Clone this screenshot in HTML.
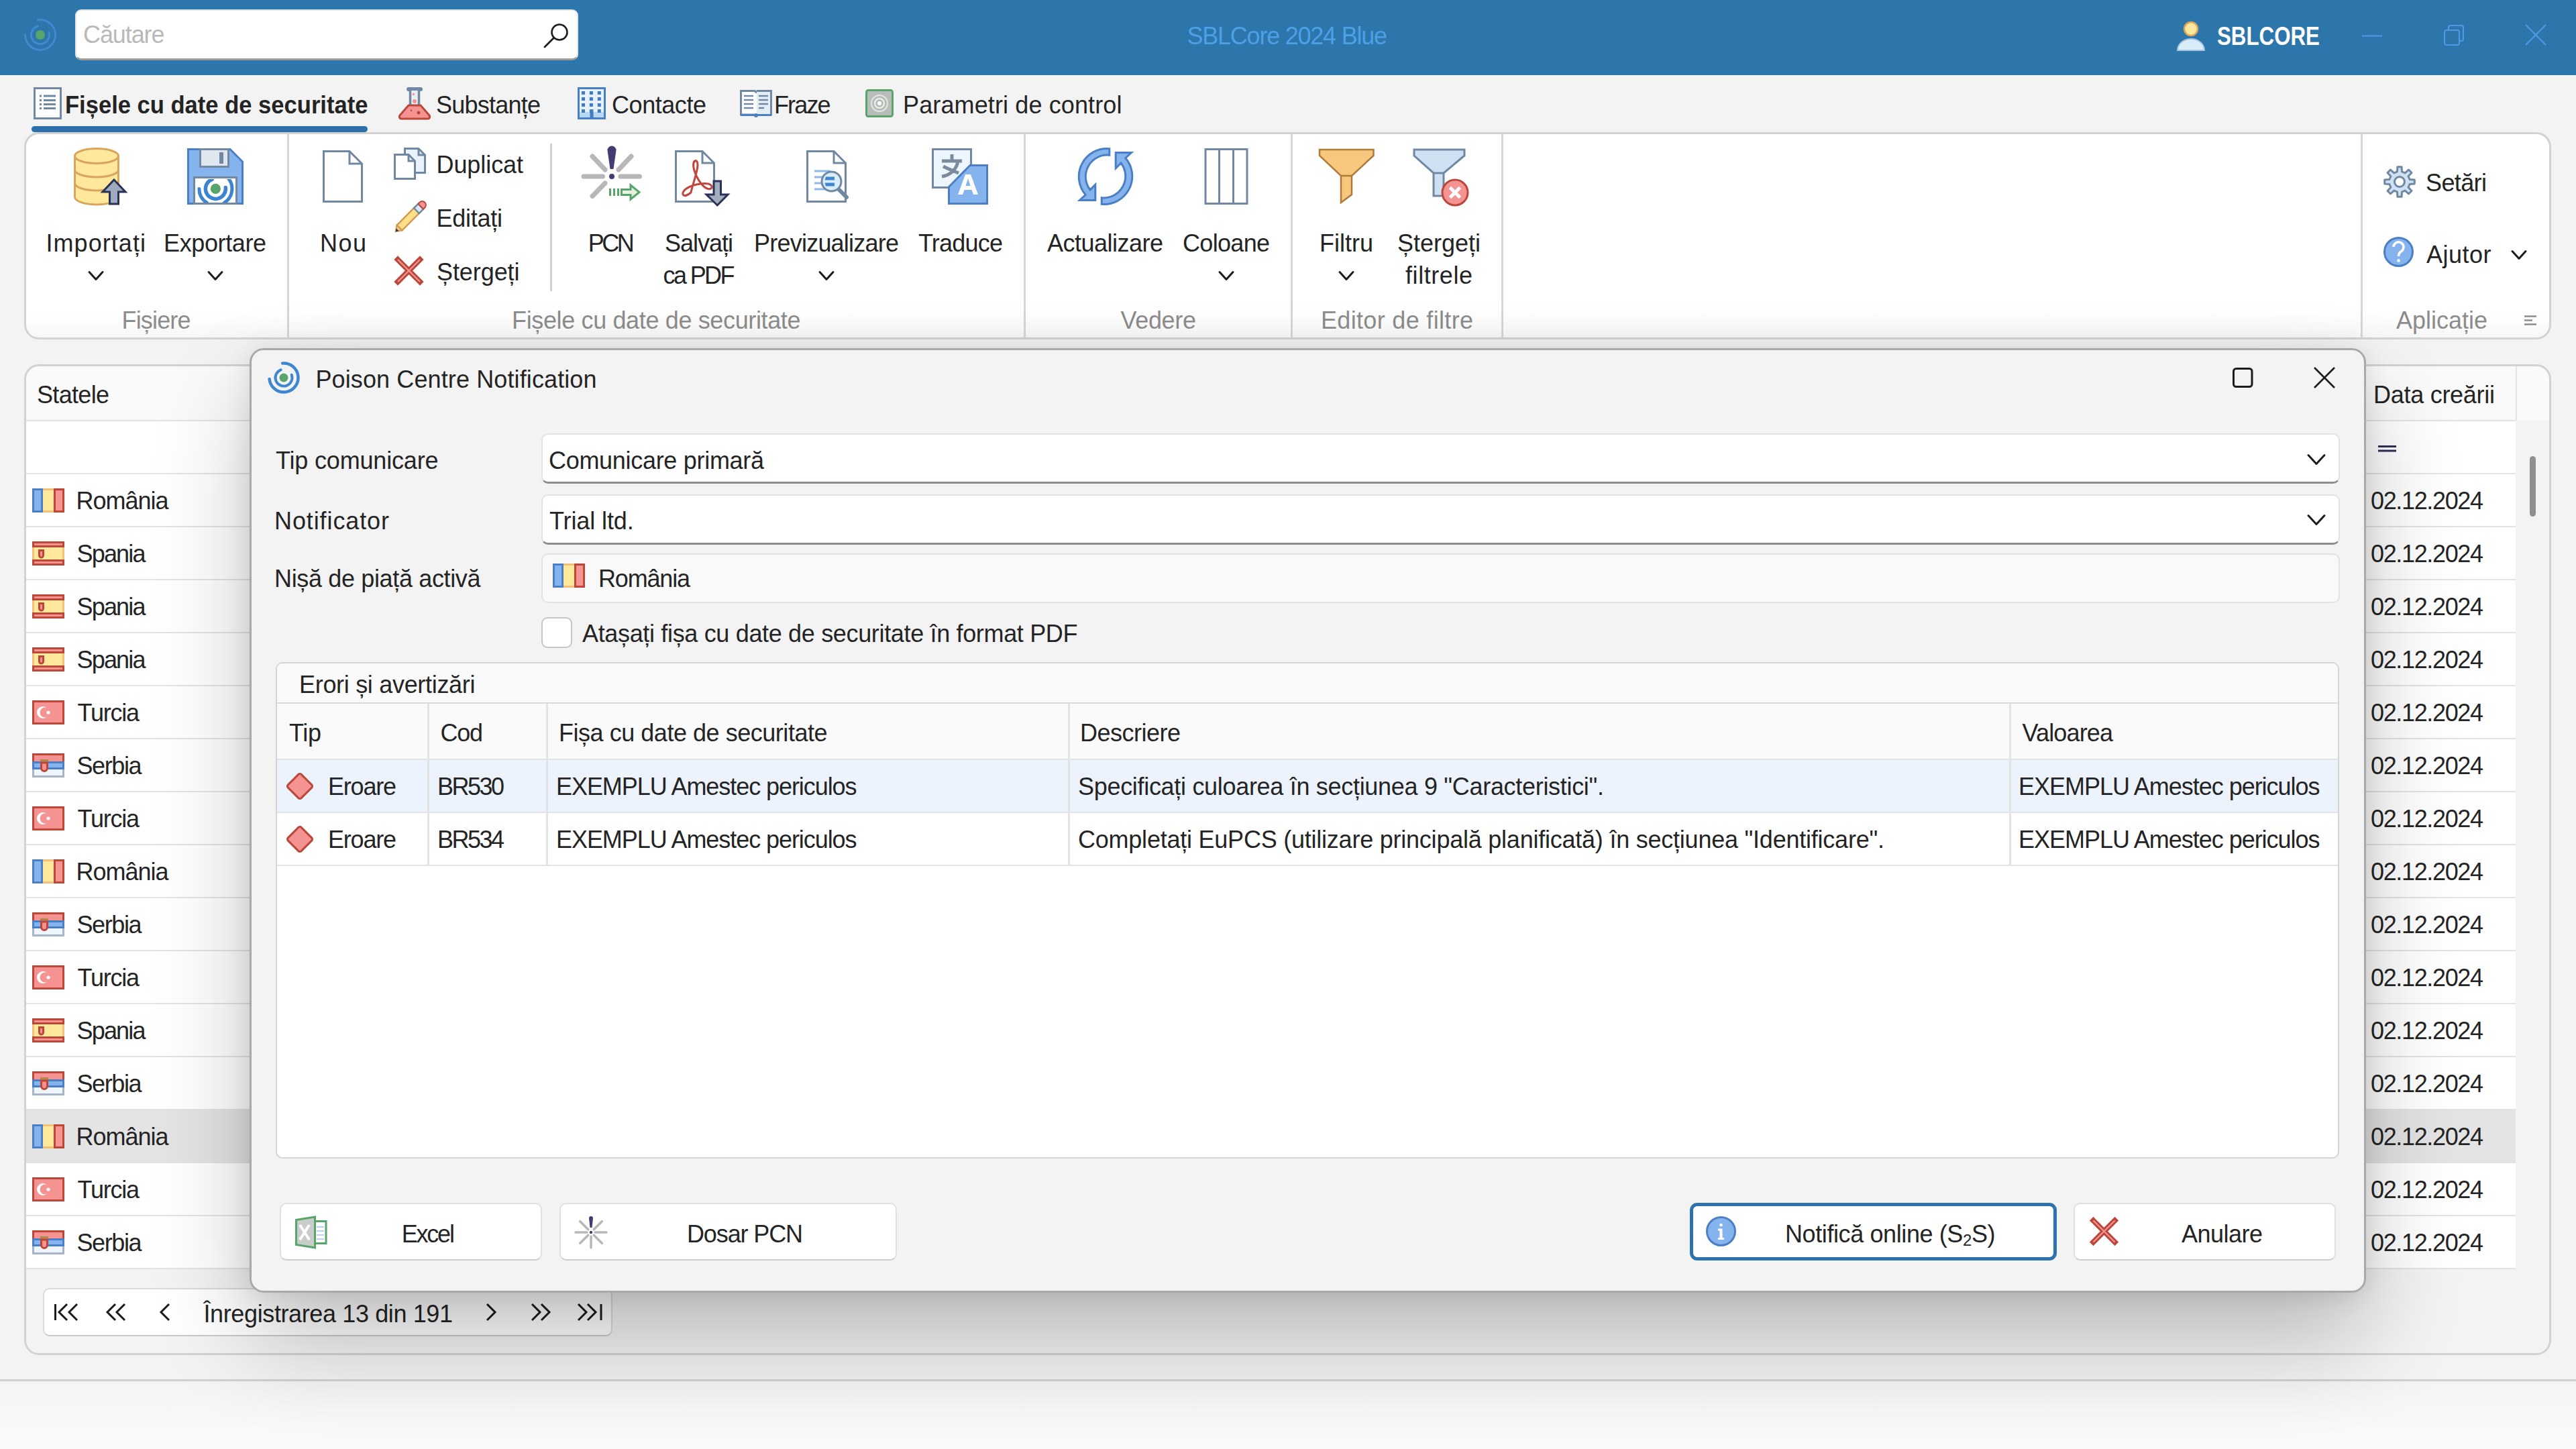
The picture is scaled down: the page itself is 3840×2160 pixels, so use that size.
<!DOCTYPE html><html><head><meta charset="utf-8"><style>
html,body{margin:0;padding:0;width:3840px;height:2160px;overflow:hidden;background:#f3f3f3;font-family:"Liberation Sans",sans-serif}
.t{position:absolute;white-space:pre}
svg{overflow:visible}
</style></head><body>
<div style="position:absolute;left:0px;top:0px;width:3840px;height:112px;background:#2c76ab"></div>
<div style="position:absolute;left:112px;top:14px;width:750px;height:76px;background:#fff;border:2px solid #e4e6e8;border-bottom:3px solid #9c9c9c;border-radius:9px;box-sizing:border-box"></div>
<div class="t" style="left:124.0px;top:34px;font-size:36px;line-height:36px;font-weight:400;color:#b9b9b9;letter-spacing:-1.092px;">Căutare</div>
<div class="t" style="left:1769.5px;top:36px;font-size:36px;line-height:36px;font-weight:400;color:#4d9fe6;letter-spacing:-1.231px;">SBLCore 2024 Blue</div>
<div class="t" style="left:3305.2px;top:35px;font-size:38px;line-height:38px;font-weight:700;color:#ffffff;transform:scaleX(0.8231);transform-origin:0 0">SBLCORE</div>
<svg style="position:absolute;left:30px;top:22px" width="61" height="61" viewBox="30 22 61 61"><path d="M56.1 29.8A22.5 22.5 0 1 1 37.5 52.0" fill="none" stroke="#4a8fd8" stroke-width="3.0" stroke-linecap="round" opacity="0.8"/><path d="M73.0 48.5A13.5 13.5 0 1 1 56.5 39.0" fill="none" stroke="#4a8fd8" stroke-width="3.0" stroke-linecap="round" opacity="0.8"/><circle cx="60" cy="52" r="7.0" fill="#57a56a"/></svg><svg style="position:absolute;left:805px;top:30px" width="45" height="45" viewBox="805 30 45 45"><circle cx="834" cy="48" r="11.5" fill="none" stroke="#1c1c1c" stroke-width="2.6"/><path d="M825.5 56.5L812 70" stroke="#1c1c1c" stroke-width="2.8" stroke-linecap="round"/></svg><svg style="position:absolute;left:3242px;top:28px" width="48" height="51" viewBox="3242 28 48 51"><circle cx="3266" cy="43" r="10" fill="#ffe89c" stroke="#d9a55a" stroke-width="2.5"/><path d="M3246 75A20 17 0 0 1 3286 75Z" fill="#d9ecfa" stroke="#a9c5dd" stroke-width="2"/></svg><svg style="position:absolute;left:3515px;top:45px" width="41" height="15" viewBox="3515 45 41 15"><path d="M3521 53.5H3551" stroke="#4f98e3" stroke-width="2.2"/></svg><svg style="position:absolute;left:3638px;top:33px" width="40" height="39" viewBox="3638 33 40 39"><rect x="3644" y="45" width="22" height="22" rx="3" fill="none" stroke="#4f98e3" stroke-width="2.2"/><path d="M3650 44V41A3 3 0 0 1 3653 38H3669A3 3 0 0 1 3672 41V58A3 3 0 0 1 3669 61H3667" fill="none" stroke="#4f98e3" stroke-width="2.2"/></svg><svg style="position:absolute;left:3758px;top:30px" width="44" height="44" viewBox="3758 30 44 44"><path d="M3765 37L3795 67M3795 37L3765 67" stroke="#4f98e3" stroke-width="2.4"/></svg>
<div class="t" style="left:97.1px;top:139px;font-size:36px;line-height:36px;font-weight:700;color:#242424;transform:scaleX(0.9600);transform-origin:0 0">Fișele cu date de securitate</div>
<div style="position:absolute;left:47px;top:188px;width:501px;height:9px;background:#2b70aa;border-radius:5px"></div>
<div class="t" style="left:650.0px;top:139px;font-size:36px;line-height:36px;font-weight:400;color:#242424;letter-spacing:-0.763px;">Substanțe</div>
<div class="t" style="left:912.0px;top:139px;font-size:36px;line-height:36px;font-weight:400;color:#242424;letter-spacing:-0.438px;">Contacte</div>
<div class="t" style="left:1154.0px;top:139px;font-size:36px;line-height:36px;font-weight:400;color:#242424;letter-spacing:-1.875px;">Fraze</div>
<div class="t" style="left:1346.0px;top:139px;font-size:36px;line-height:36px;font-weight:400;color:#242424;letter-spacing:0.124px;">Parametri de control</div>
<svg style="position:absolute;left:48px;top:128px" width="47" height="52" viewBox="48 128 47 52"><rect x="51.5" y="131.5" width="39" height="45" fill="#fff" stroke="#7088a2" stroke-width="3"/><rect x="59" y="141.5" width="3" height="3" fill="#7088a2"/><rect x="65" y="141.5" width="18" height="3" fill="#7088a2"/><rect x="59" y="148.0" width="3" height="3" fill="#7088a2"/><rect x="65" y="148.0" width="18" height="3" fill="#7088a2"/><rect x="59" y="154.0" width="3" height="3" fill="#7088a2"/><rect x="65" y="154.0" width="18" height="3" fill="#7088a2"/><rect x="59" y="160.0" width="3" height="3" fill="#7088a2"/><rect x="65" y="160.0" width="18" height="3" fill="#7088a2"/></svg><svg style="position:absolute;left:592px;top:128px" width="53" height="53" viewBox="592 128 53 53"><path d="M609 133H627" stroke="#7088a2" stroke-width="6" stroke-linecap="round"/><path d="M611.5 135V158H624.5V135" fill="#e8eef3" stroke="#7088a2" stroke-width="3.5"/><circle cx="616.5" cy="140.5" r="1.7" fill="#f59393"/><circle cx="618" cy="151" r="3" fill="#f59393"/><path d="M609 157H627L640 172A3 3 0 0 1 638 177H598A3 3 0 0 1 596 172Z" fill="#f59393" stroke="#bb4739" stroke-width="3" stroke-linejoin="round"/><circle cx="613" cy="164.5" r="1.2" fill="#bb4739"/><circle cx="624" cy="168" r="2.5" fill="#bb4739"/></svg><svg style="position:absolute;left:858px;top:128px" width="48" height="52" viewBox="858 128 48 52"><rect x="862.5" y="131.5" width="39" height="45" fill="#e6f1fb" stroke="#4b7fc5" stroke-width="3"/><rect x="864" y="167" width="36" height="8" fill="#b9d6f3"/><rect x="867.0" y="136" width="5" height="5" fill="#3f7cc2"/><rect x="878.9" y="136" width="5" height="5" fill="#3f7cc2"/><rect x="890.8" y="136" width="5" height="5" fill="#3f7cc2"/><rect x="867.0" y="145" width="5" height="5" fill="#3f7cc2"/><rect x="878.9" y="145" width="5" height="5" fill="#3f7cc2"/><rect x="890.8" y="145" width="5" height="5" fill="#3f7cc2"/><rect x="867.0" y="154" width="5" height="5" fill="#3f7cc2"/><rect x="878.9" y="154" width="5" height="5" fill="#3f7cc2"/><rect x="890.8" y="154" width="5" height="5" fill="#3f7cc2"/><rect x="867.0" y="163" width="5" height="5" fill="#3f7cc2"/><rect x="878.9" y="163" width="5" height="5" fill="#3f7cc2"/><rect x="890.8" y="163" width="5" height="5" fill="#3f7cc2"/><rect x="879.5" y="163" width="5" height="13" fill="#3f7cc2"/></svg><svg style="position:absolute;left:1100px;top:130px" width="54" height="47" viewBox="1100 130 54 47"><path d="M1104.5 135.5H1125L1127 137.5L1129 135.5H1149.5V171H1104.5Z" fill="#fff" stroke="#7088a2" stroke-width="3"/><rect x="1128" y="137" width="20" height="33" fill="#e3edf6"/><path d="M1104 171.5H1150" stroke="#4b7fc5" stroke-width="3"/><circle cx="1127" cy="172" r="3" fill="#4b7fc5"/><rect x="1109" y="141.8" width="14" height="2.4" fill="#7088a2"/><rect x="1131" y="141.8" width="14" height="2.4" fill="#7088a2"/><rect x="1109" y="147.8" width="14" height="2.4" fill="#7088a2"/><rect x="1131" y="147.8" width="14" height="2.4" fill="#7088a2"/><rect x="1109" y="153.8" width="14" height="2.4" fill="#7088a2"/><rect x="1131" y="153.8" width="14" height="2.4" fill="#7088a2"/><rect x="1109" y="159.8" width="14" height="2.4" fill="#7088a2"/><rect x="1131" y="159.8" width="8" height="2.4" fill="#7088a2"/></svg><svg style="position:absolute;left:1288px;top:131px" width="47" height="46" viewBox="1288 131 47 46"><rect x="1291.5" y="134.5" width="39" height="39" rx="3" fill="#b9bdb9" stroke="#57a56a" stroke-width="3"/><circle cx="1311" cy="154" r="12" fill="none" stroke="#dfe9e3" stroke-width="2"/><circle cx="1311" cy="154" r="7" fill="none" stroke="#eef4ef" stroke-width="2"/><circle cx="1311" cy="154" r="3" fill="#fff"/></svg>
<div style="position:absolute;left:36px;top:197px;width:3767px;height:309px;background:linear-gradient(#fff 0,#fff 88%,#f7f7f7 100%);border:3px solid #d2d2d2;border-radius:22px;box-sizing:border-box"></div>
<div style="position:absolute;left:428px;top:200px;width:3px;height:304px;background:#d6d6d6"></div>
<div style="position:absolute;left:1526px;top:200px;width:3px;height:304px;background:#d6d6d6"></div>
<div style="position:absolute;left:1924px;top:200px;width:3px;height:304px;background:#d6d6d6"></div>
<div style="position:absolute;left:2238px;top:200px;width:3px;height:304px;background:#d6d6d6"></div>
<div style="position:absolute;left:3519px;top:200px;width:3px;height:304px;background:#d6d6d6"></div>
<div style="position:absolute;left:820px;top:214px;width:3px;height:220px;background:#d0d0d0"></div>
<svg style="position:absolute;left:105px;top:216px" width="87" height="94" viewBox="105 216 87 94"><path d="M111.5 232.5V293.5A32.5 11.5 0 0 0 176.5 293.5V232.5" fill="#ffe89c" stroke="#d9a55a" stroke-width="3"/><ellipse cx="144" cy="232.5" rx="32.5" ry="11" fill="#ffe89c" stroke="#d9a55a" stroke-width="3"/><path d="M111.5 253A32.5 11 0 0 0 176.5 253M111.5 273A32.5 11 0 0 0 176.5 273" fill="none" stroke="#d9a55a" stroke-width="3"/><path d="M170 268L187 286H176.5V304H163.5V286H153Z" fill="#9eabbe" stroke="#2b3157" stroke-width="3" stroke-linejoin="miter"/></svg><svg style="position:absolute;left:275px;top:216px" width="93" height="94" viewBox="275 216 93 94"><path d="M280.5 222.5H343L361.5 241V303.5H280.5Z" fill="#85b3ee" stroke="#4b7fc5" stroke-width="3"/><rect x="298.5" y="222.5" width="42" height="26" fill="#dfe6ee" stroke="#7088a2" stroke-width="3"/><rect x="327" y="227" width="6" height="17" fill="#7088a2"/><rect x="289.5" y="264.5" width="63" height="39" fill="#fff" stroke="#7088a2" stroke-width="3"/><clipPath id="flc"><rect x="291" y="267" width="59" height="35"/></clipPath><g clip-path="url(#flc)"><path d="M336.3 279.6A15 15 0 1 1 316.3 267.3" fill="none" stroke="#3a84d2" stroke-width="5.5" stroke-linecap="round"/><path d="M308.4 302.2A24.5 24.5 0 0 1 296.9 281.4" fill="none" stroke="#3a84d2" stroke-width="5" stroke-linecap="round"/><path d="M338.7 264.1A24.5 24.5 0 0 1 334.4 302.2" fill="none" stroke="#3a84d2" stroke-width="5" stroke-linecap="round"/></g><circle cx="321.4" cy="281.4" r="7.6" fill="#57a56a"/></svg><svg style="position:absolute;left:478px;top:220px" width="67" height="86" viewBox="478 220 67 86"><path d="M482.5 225.5H521L539.5 244V300.5H482.5Z" fill="#fff" stroke="#7088a2" stroke-width="3" stroke-linejoin="miter"/><path d="M521 225.5V244H539.5" fill="none" stroke="#7088a2" stroke-width="3"/></svg><svg style="position:absolute;left:583px;top:216px" width="57" height="56" viewBox="583 216 57 56"><path d="M603.5 221.5H624L633.5 231V257.5H603.5Z" fill="#eaf3fb" stroke="#7088a2" stroke-width="3" stroke-linejoin="miter"/><path d="M624 221.5V231H633.5" fill="none" stroke="#7088a2" stroke-width="3"/><path d="M588.5 230.5H609L618.5 240V266.5H588.5Z" fill="#fff" stroke="#7088a2" stroke-width="3" stroke-linejoin="miter"/><path d="M609 230.5V240H618.5" fill="none" stroke="#7088a2" stroke-width="3"/></svg><svg style="position:absolute;left:585px;top:298px" width="51" height="52" viewBox="585 298 51 52"><g transform="translate(611,324) rotate(-45)"><path d="M-22 -5.5H17V5.5H-22Z" fill="#ffe08a" stroke="#d49a4f" stroke-width="2.5"/><rect x="14" y="-5.5" width="9" height="11" fill="#dce6f0" stroke="#7088a2" stroke-width="2.5"/><path d="M23 -5.5H26A5.5 5.5 0 0 1 26 5.5H23Z" fill="#f59393" stroke="#bb4739" stroke-width="2"/><path d="M-22 -5.5L-30 0L-22 5.5Z" fill="#f3c98a" stroke="#d49a4f" stroke-width="2"/><path d="M-26 -2.8L-30 0L-26 2.8Z" fill="#2b3157"/></g></svg><svg style="position:absolute;left:583px;top:376px" width="53" height="54" viewBox="583 376 53 54"><path d="M593 387L626 420M626 387L593 420" stroke="#bb4739" stroke-width="8" stroke-linecap="square"/><path d="M593 387L626 420M626 387L593 420" stroke="#f59393" stroke-width="2.2"/></svg><svg style="position:absolute;left:862px;top:214px" width="98" height="88" viewBox="862 214 98 88"><line x1="870" y1="263" x2="898.5" y2="263" stroke="#b9b5b8" stroke-width="7" stroke-linecap="round"/><line x1="925" y1="263" x2="953.5" y2="263" stroke="#b9b5b8" stroke-width="7" stroke-linecap="round"/><line x1="883" y1="233" x2="902" y2="253" stroke="#b9b5b8" stroke-width="7" stroke-linecap="round"/><line x1="941" y1="233" x2="922" y2="253" stroke="#b9b5b8" stroke-width="7" stroke-linecap="round"/><line x1="902" y1="273" x2="883" y2="292.5" stroke="#b9b5b8" stroke-width="7" stroke-linecap="round"/><path d="M905.5 224A6.5 6.5 0 0 1 918.5 224L914.5 252H909.5Z" fill="#463a73"/><circle cx="912" cy="263" r="4" fill="#463a73"/><rect x="908" y="281" width="3" height="11" fill="#57a56a"/><rect x="914" y="281" width="3" height="11" fill="#57a56a"/><rect x="920" y="281" width="3" height="11" fill="#57a56a"/><path d="M926.5 282.5H940V276L953 286.5L940 297V290.5H926.5Z" fill="#e9f2e0" stroke="#57a56a" stroke-width="3" stroke-linejoin="miter"/></svg><svg style="position:absolute;left:1002px;top:220px" width="88" height="92" viewBox="1002 220 88 92"><path d="M1007.5 225.5H1047L1064.5 243V300.5H1007.5Z" fill="#fff" stroke="#7088a2" stroke-width="3" stroke-linejoin="miter"/><path d="M1047 225.5V243H1064.5" fill="none" stroke="#7088a2" stroke-width="3"/><path d="M1030 287C1018 297 1014 288 1022 282C1030 276 1046 272 1056 274C1064 276 1062 284 1054 281C1046 278 1036 262 1034 250C1032 238 1040 236 1040 246C1040 256 1032 276 1030 287Z" fill="none" stroke="#c0463e" stroke-width="3"/><path d="M1064 270H1074.5V290H1085L1069.3 306L1053 290H1064Z" fill="#a0aec0" stroke="#2b3157" stroke-width="3" stroke-linejoin="miter"/></svg><svg style="position:absolute;left:1198px;top:220px" width="70" height="86" viewBox="1198 220 70 86"><path d="M1203.5 225.5H1243L1260.5 243V300.5H1203.5Z" fill="#fff" stroke="#7088a2" stroke-width="3" stroke-linejoin="miter"/><path d="M1243 225.5V243H1260.5" fill="none" stroke="#7088a2" stroke-width="3"/><rect x="1214" y="253.5" width="24" height="3" fill="#8db8ea"/><rect x="1214" y="262.5" width="24" height="3" fill="#8db8ea"/><rect x="1214" y="271.5" width="24" height="3" fill="#8db8ea"/><rect x="1214" y="280.5" width="24" height="3" fill="#8db8ea"/><line x1="1250" y1="282" x2="1262" y2="294" stroke="#7088a2" stroke-width="6" stroke-linecap="round"/><circle cx="1239.5" cy="270.5" r="14.5" fill="#d9eefa" stroke="#7088a2" stroke-width="3"/><path d="M1231 263.5H1244V268.5H1229.5Z M1229.5 272.5H1244V277.5H1231Z" fill="#3f86d0"/></svg><svg style="position:absolute;left:1385px;top:217px" width="92" height="92" viewBox="1385 217 92 92"><rect x="1390.5" y="222.5" width="57" height="57" fill="#eef6fd" stroke="#7088a2" stroke-width="3"/><path d="M1404 240H1434M1419 230V240M1428 240C1426 254 1414 262 1404 263M1406 248C1414 252 1424 256 1429 258" fill="none" stroke="#7a8ba0" stroke-width="5"/><path d="M1446 246.5H1471.5V303.5H1414.5V278.5Z" fill="#85b3ee" stroke="#4b7fc5" stroke-width="3"/><path d="M1428 290L1439 260H1447L1458 290H1451L1448.5 283H1437.5L1435 290ZM1439.5 277H1446.5L1443 266Z" fill="#fff"/></svg><svg style="position:absolute;left:1600px;top:215px" width="96" height="96" viewBox="1600 215 96 96"><path d="M1653.8 221.7A41.7 41.7 0 0 0 1618.3 290.4L1609.5 298.5L1632.8 298.5L1632.8 275.2L1625.0 283.0A32.2 32.2 0 0 1 1653.8 231.3Z" fill="#85b3ee" stroke="#4b7fc5" stroke-width="3" stroke-linejoin="miter"/><path d="M1642.2 304.3A41.7 41.7 0 0 0 1677.7 235.6L1686.5 227.5L1663.2 227.5L1663.2 250.8L1671.0 243.0A32.2 32.2 0 0 1 1642.2 294.7Z" fill="#85b3ee" stroke="#4b7fc5" stroke-width="3" stroke-linejoin="miter"/></svg><svg style="position:absolute;left:1792px;top:218px" width="72" height="90" viewBox="1792 218 72 90"><rect x="1797" y="222.5" width="62" height="81" fill="#fff" stroke="#7088a2" stroke-width="3"/><path d="M1817.5 222.5V303.5M1838.5 222.5V303.5" stroke="#7088a2" stroke-width="3"/></svg><svg style="position:absolute;left:1962px;top:218px" width="90" height="90" viewBox="1962 218 90 90"><path d="M1967 223H2047.5V232L2015 262V290L1999 302V262L1967 232Z" fill="#f8c77e" stroke="#b07a3a" stroke-width="2.5" stroke-linejoin="miter"/><path d="M1999 262H2015" stroke="#b07a3a" stroke-width="2.5"/></svg><svg style="position:absolute;left:2103px;top:218px" width="90" height="92" viewBox="2103 218 90 92"><path d="M2108 223H2183V232L2152 258V292L2137 292V258L2108 232Z" fill="#cfe0f3" stroke="#7088a2" stroke-width="3" stroke-linejoin="miter"/><path d="M2137 258H2152" stroke="#7088a2" stroke-width="3"/><circle cx="2169" cy="287" r="19" fill="#f59393" stroke="#bb4739" stroke-width="3"/><path d="M2161.5 279.5L2176.5 294.5M2176.5 279.5L2161.5 294.5" stroke="#fff" stroke-width="5"/></svg><svg style="position:absolute;left:3550px;top:243px" width="54" height="56" viewBox="3550 243 54 56"><polygon points="3573.5,255.9 3573.9,248.7 3580.1,248.7 3580.5,255.9 3585.2,257.9 3590.5,253.0 3595.0,257.5 3590.1,262.8 3592.1,267.5 3599.3,267.9 3599.3,274.1 3592.1,274.5 3590.1,279.2 3595.0,284.5 3590.5,289.0 3585.2,284.1 3580.5,286.1 3580.1,293.3 3573.9,293.3 3573.5,286.1 3568.8,284.1 3563.5,289.0 3559.0,284.5 3563.9,279.2 3561.9,274.5 3554.7,274.1 3554.7,267.9 3561.9,267.5 3563.9,262.8 3559.0,257.5 3563.5,253.0 3568.8,257.9" fill="#cfe0f3" stroke="#7088a2" stroke-width="3" stroke-linejoin="round"/><circle cx="3577" cy="271" r="7.5" fill="#fff" stroke="#7088a2" stroke-width="3"/></svg><svg style="position:absolute;left:3550px;top:350px" width="51" height="51" viewBox="3550 350 51 51"><circle cx="3575.5" cy="375.5" r="21" fill="#85b3ee" stroke="#4b7fc5" stroke-width="3"/><path d="M3568 368A7.5 7.5 0 1 1 3579 375C3576 377 3575.5 379 3575.5 382" fill="none" stroke="#fff" stroke-width="3.5"/><circle cx="3575.5" cy="388.5" r="2.3" fill="#fff"/></svg><svg style="position:absolute;left:3760px;top:468px" width="24" height="19" viewBox="3760 468 24 19"><path d="M3763 471.5H3781M3763 477.5H3775M3763 483.5H3781" stroke="#8c8c8c" stroke-width="2.5"/></svg>
<svg style="position:absolute;left:123px;top:400px" width="40" height="22" viewBox="123 400 40 22"><path d="M133.0 405.5L143 416.5L153.0 405.5" fill="none" stroke="#1c1c1c" stroke-width="3" stroke-linecap="round" stroke-linejoin="round"/></svg>
<svg style="position:absolute;left:301px;top:400px" width="40" height="22" viewBox="301 400 40 22"><path d="M311.0 405.5L321 416.5L331.0 405.5" fill="none" stroke="#1c1c1c" stroke-width="3" stroke-linecap="round" stroke-linejoin="round"/></svg>
<svg style="position:absolute;left:1212px;top:400px" width="40" height="22" viewBox="1212 400 40 22"><path d="M1222.0 405.5L1232 416.5L1242.0 405.5" fill="none" stroke="#1c1c1c" stroke-width="3" stroke-linecap="round" stroke-linejoin="round"/></svg>
<svg style="position:absolute;left:1808px;top:400px" width="40" height="22" viewBox="1808 400 40 22"><path d="M1818.0 405.5L1828 416.5L1838.0 405.5" fill="none" stroke="#1c1c1c" stroke-width="3" stroke-linecap="round" stroke-linejoin="round"/></svg>
<svg style="position:absolute;left:1987px;top:400px" width="40" height="22" viewBox="1987 400 40 22"><path d="M1997.0 405.5L2007 416.5L2017.0 405.5" fill="none" stroke="#1c1c1c" stroke-width="3" stroke-linecap="round" stroke-linejoin="round"/></svg>
<svg style="position:absolute;left:3735px;top:369px" width="40" height="22" viewBox="3735 369 40 22"><path d="M3745.0 374.5L3755 385.5L3765.0 374.5" fill="none" stroke="#1c1c1c" stroke-width="3" stroke-linecap="round" stroke-linejoin="round"/></svg>
<div class="t" style="left:68.5px;top:345px;font-size:36px;line-height:36px;font-weight:400;color:#242424;letter-spacing:1.057px;">Importați</div>
<div class="t" style="left:244.0px;top:345px;font-size:36px;line-height:36px;font-weight:400;color:#242424;letter-spacing:-0.382px;">Exportare</div>
<div class="t" style="left:477.0px;top:345px;font-size:36px;line-height:36px;font-weight:400;color:#242424;letter-spacing:1.490px;">Nou</div>
<div class="t" style="left:876.8px;top:345px;font-size:36px;line-height:36px;font-weight:400;color:#242424;letter-spacing:-3.505px;">PCN</div>
<div class="t" style="left:991.0px;top:345px;font-size:36px;line-height:36px;font-weight:400;color:#242424;letter-spacing:-1.009px;">Salvați</div>
<div class="t" style="left:988.5px;top:393px;font-size:36px;line-height:36px;font-weight:400;color:#242424;letter-spacing:-2.607px;">ca PDF</div>
<div class="t" style="left:1124.0px;top:345px;font-size:36px;line-height:36px;font-weight:400;color:#242424;letter-spacing:-0.774px;">Previzualizare</div>
<div class="t" style="left:1369.0px;top:345px;font-size:36px;line-height:36px;font-weight:400;color:#242424;letter-spacing:-0.785px;">Traduce</div>
<div class="t" style="left:1561.0px;top:345px;font-size:36px;line-height:36px;font-weight:400;color:#242424;letter-spacing:-0.506px;">Actualizare</div>
<div class="t" style="left:1763.0px;top:345px;font-size:36px;line-height:36px;font-weight:400;color:#242424;letter-spacing:-0.680px;">Coloane</div>
<div class="t" style="left:1967.0px;top:345px;font-size:36px;line-height:36px;font-weight:400;color:#242424;letter-spacing:0.005px;">Filtru</div>
<div class="t" style="left:2083.0px;top:345px;font-size:36px;line-height:36px;font-weight:400;color:#242424;letter-spacing:-0.010px;">Ștergeți</div>
<div class="t" style="left:2095.0px;top:393px;font-size:36px;line-height:36px;font-weight:400;color:#242424;letter-spacing:0.570px;">filtrele</div>
<div class="t" style="left:650.5px;top:228px;font-size:36px;line-height:36px;font-weight:400;color:#242424;letter-spacing:-0.080px;">Duplicat</div>
<div class="t" style="left:650.5px;top:308px;font-size:36px;line-height:36px;font-weight:400;color:#242424;letter-spacing:-0.259px;">Editați</div>
<div class="t" style="left:651.0px;top:388px;font-size:36px;line-height:36px;font-weight:400;color:#242424;letter-spacing:-0.081px;">Ștergeți</div>
<div class="t" style="left:3616.0px;top:255px;font-size:36px;line-height:36px;font-weight:400;color:#242424;letter-spacing:-0.609px;">Setări</div>
<div class="t" style="left:3617.0px;top:362px;font-size:36px;line-height:36px;font-weight:400;color:#242424;letter-spacing:0.489px;">Ajutor</div>
<div class="t" style="left:181.5px;top:460px;font-size:36px;line-height:36px;font-weight:400;color:#8c8c8c;letter-spacing:-0.833px;">Fișiere</div>
<div class="t" style="left:763.0px;top:460px;font-size:36px;line-height:36px;font-weight:400;color:#8c8c8c;letter-spacing:-0.360px;">Fișele cu date de securitate</div>
<div class="t" style="left:1670.5px;top:460px;font-size:36px;line-height:36px;font-weight:400;color:#8c8c8c;letter-spacing:-0.316px;">Vedere</div>
<div class="t" style="left:1969.0px;top:460px;font-size:36px;line-height:36px;font-weight:400;color:#8c8c8c;letter-spacing:0.328px;">Editor de filtre</div>
<div class="t" style="left:3572.0px;top:460px;font-size:36px;line-height:36px;font-weight:400;color:#8c8c8c;letter-spacing:-0.006px;">Aplicație</div>
<div style="position:absolute;left:36px;top:543px;width:3767px;height:1477px;background:#f3f3f3;border:3px solid #d2d2d2;border-radius:22px;box-sizing:border-box"></div>
<div style="position:absolute;left:39px;top:546px;width:3761px;height:81px;background:#fafafa;border-radius:20px 20px 0 0"></div>
<div style="position:absolute;left:39px;top:626px;width:3711px;height:2px;background:#e3e3e3"></div>
<div style="position:absolute;left:39px;top:628px;width:3711px;height:78px;background:#fff"></div>
<div style="position:absolute;left:39px;top:705px;width:3711px;height:2px;background:#e3e3e3"></div>
<div class="t" style="left:55.0px;top:571px;font-size:36px;line-height:36px;font-weight:400;color:#242424;letter-spacing:-0.676px;">Statele</div>
<div class="t" style="left:3538.0px;top:571px;font-size:36px;line-height:36px;font-weight:400;color:#242424;letter-spacing:-0.278px;">Data creării</div>
<svg style="position:absolute;left:3540px;top:660px" width="36" height="18" viewBox="3540 660 36 18"><path d="M3545 665.5H3572M3545 672H3572" stroke="#2b3157" stroke-width="3"/></svg>
<div style="position:absolute;left:39px;top:707px;width:3711px;height:77px;background:#fff"></div>
<div style="position:absolute;left:39px;top:784px;width:3711px;height:2px;background:#e3e3e3"></div>
<div class="t" style="left:113.5px;top:729px;font-size:36px;line-height:36px;font-weight:400;color:#242424;letter-spacing:-1.008px;">România</div>
<svg style="position:absolute;left:48px;top:728px" width="48" height="36" viewBox="48 728 48 36"><rect x="49.5" y="729.5" width="13" height="33" fill="#85b3ee" stroke="#4b7fc5" stroke-width="3"/><rect x="64" y="728" width="16" height="36" fill="#ffe89c"/><rect x="64" y="728" width="16" height="3" fill="#f4bf78"/><rect x="64" y="761" width="16" height="3" fill="#f4bf78"/><rect x="81.5" y="729.5" width="13" height="33" fill="#f59393" stroke="#bb4739" stroke-width="3"/></svg>
<div class="t" style="left:3534.0px;top:729px;font-size:36px;line-height:36px;font-weight:400;color:#242424;letter-spacing:-1.350px;">02.12.2024</div>
<div style="position:absolute;left:39px;top:786px;width:3711px;height:77px;background:#fff"></div>
<div style="position:absolute;left:39px;top:863px;width:3711px;height:2px;background:#e3e3e3"></div>
<div class="t" style="left:114.5px;top:808px;font-size:36px;line-height:36px;font-weight:400;color:#242424;letter-spacing:-1.815px;">Spania</div>
<svg style="position:absolute;left:48px;top:807px" width="48" height="36" viewBox="48 807 48 36"><rect x="48" y="816" width="48" height="18" fill="#ffe89c"/><rect x="48" y="816" width="3" height="18" fill="#f4bf78"/><rect x="93" y="816" width="3" height="18" fill="#f4bf78"/><rect x="49.5" y="808.5" width="45" height="6" fill="#f59393" stroke="#bb4739" stroke-width="3"/><rect x="49.5" y="835.5" width="45" height="6" fill="#f59393" stroke="#bb4739" stroke-width="3"/><path d="M58.5 820.5h6v7.5a3 3 0 0 1 -6 0z" fill="#f59393" stroke="#bb4739" stroke-width="3"/></svg>
<div class="t" style="left:3534.0px;top:808px;font-size:36px;line-height:36px;font-weight:400;color:#242424;letter-spacing:-1.350px;">02.12.2024</div>
<div style="position:absolute;left:39px;top:865px;width:3711px;height:77px;background:#fff"></div>
<div style="position:absolute;left:39px;top:942px;width:3711px;height:2px;background:#e3e3e3"></div>
<div class="t" style="left:114.5px;top:887px;font-size:36px;line-height:36px;font-weight:400;color:#242424;letter-spacing:-1.815px;">Spania</div>
<svg style="position:absolute;left:48px;top:886px" width="48" height="36" viewBox="48 886 48 36"><rect x="48" y="895" width="48" height="18" fill="#ffe89c"/><rect x="48" y="895" width="3" height="18" fill="#f4bf78"/><rect x="93" y="895" width="3" height="18" fill="#f4bf78"/><rect x="49.5" y="887.5" width="45" height="6" fill="#f59393" stroke="#bb4739" stroke-width="3"/><rect x="49.5" y="914.5" width="45" height="6" fill="#f59393" stroke="#bb4739" stroke-width="3"/><path d="M58.5 899.5h6v7.5a3 3 0 0 1 -6 0z" fill="#f59393" stroke="#bb4739" stroke-width="3"/></svg>
<div class="t" style="left:3534.0px;top:887px;font-size:36px;line-height:36px;font-weight:400;color:#242424;letter-spacing:-1.350px;">02.12.2024</div>
<div style="position:absolute;left:39px;top:944px;width:3711px;height:77px;background:#fff"></div>
<div style="position:absolute;left:39px;top:1021px;width:3711px;height:2px;background:#e3e3e3"></div>
<div class="t" style="left:114.5px;top:966px;font-size:36px;line-height:36px;font-weight:400;color:#242424;letter-spacing:-1.815px;">Spania</div>
<svg style="position:absolute;left:48px;top:965px" width="48" height="36" viewBox="48 965 48 36"><rect x="48" y="974" width="48" height="18" fill="#ffe89c"/><rect x="48" y="974" width="3" height="18" fill="#f4bf78"/><rect x="93" y="974" width="3" height="18" fill="#f4bf78"/><rect x="49.5" y="966.5" width="45" height="6" fill="#f59393" stroke="#bb4739" stroke-width="3"/><rect x="49.5" y="993.5" width="45" height="6" fill="#f59393" stroke="#bb4739" stroke-width="3"/><path d="M58.5 978.5h6v7.5a3 3 0 0 1 -6 0z" fill="#f59393" stroke="#bb4739" stroke-width="3"/></svg>
<div class="t" style="left:3534.0px;top:966px;font-size:36px;line-height:36px;font-weight:400;color:#242424;letter-spacing:-1.350px;">02.12.2024</div>
<div style="position:absolute;left:39px;top:1023px;width:3711px;height:77px;background:#fff"></div>
<div style="position:absolute;left:39px;top:1100px;width:3711px;height:2px;background:#e3e3e3"></div>
<div class="t" style="left:115.5px;top:1045px;font-size:36px;line-height:36px;font-weight:400;color:#242424;letter-spacing:-1.232px;">Turcia</div>
<svg style="position:absolute;left:48px;top:1044px" width="48" height="36" viewBox="48 1044 48 36"><rect x="49.5" y="1045.5" width="45" height="33" fill="#f59393" stroke="#bb4739" stroke-width="3"/><circle cx="64" cy="1062" r="9" fill="#fff"/><circle cx="67" cy="1062" r="7.5" fill="#f59393"/><circle cx="72" cy="1062" r="2.6" fill="#fff"/></svg>
<div class="t" style="left:3534.0px;top:1045px;font-size:36px;line-height:36px;font-weight:400;color:#242424;letter-spacing:-1.350px;">02.12.2024</div>
<div style="position:absolute;left:39px;top:1102px;width:3711px;height:77px;background:#fff"></div>
<div style="position:absolute;left:39px;top:1179px;width:3711px;height:2px;background:#e3e3e3"></div>
<div class="t" style="left:114.5px;top:1124px;font-size:36px;line-height:36px;font-weight:400;color:#242424;letter-spacing:-1.408px;">Serbia</div>
<svg style="position:absolute;left:48px;top:1123px" width="48" height="36" viewBox="48 1123 48 36"><rect x="48" y="1147" width="48" height="12" fill="#eef5fd"/><rect x="49.5" y="1145" width="45" height="12.5" fill="none" stroke="#a6b6c8" stroke-width="3"/><rect x="49.5" y="1124.5" width="45" height="12" fill="#f59393" stroke="#bb4739" stroke-width="3"/><rect x="49.5" y="1136.5" width="45" height="9" fill="#85b3ee" stroke="#4b7fc5" stroke-width="3"/><rect x="60" y="1132" width="12" height="6" fill="#b0884f"/><path d="M61.5 1137h9v8a4.5 4.5 0 0 1 -9 0z" fill="#f59393" stroke="#bb4739" stroke-width="3"/></svg>
<div class="t" style="left:3534.0px;top:1124px;font-size:36px;line-height:36px;font-weight:400;color:#242424;letter-spacing:-1.350px;">02.12.2024</div>
<div style="position:absolute;left:39px;top:1181px;width:3711px;height:77px;background:#fff"></div>
<div style="position:absolute;left:39px;top:1258px;width:3711px;height:2px;background:#e3e3e3"></div>
<div class="t" style="left:115.5px;top:1203px;font-size:36px;line-height:36px;font-weight:400;color:#242424;letter-spacing:-1.232px;">Turcia</div>
<svg style="position:absolute;left:48px;top:1202px" width="48" height="36" viewBox="48 1202 48 36"><rect x="49.5" y="1203.5" width="45" height="33" fill="#f59393" stroke="#bb4739" stroke-width="3"/><circle cx="64" cy="1220" r="9" fill="#fff"/><circle cx="67" cy="1220" r="7.5" fill="#f59393"/><circle cx="72" cy="1220" r="2.6" fill="#fff"/></svg>
<div class="t" style="left:3534.0px;top:1203px;font-size:36px;line-height:36px;font-weight:400;color:#242424;letter-spacing:-1.350px;">02.12.2024</div>
<div style="position:absolute;left:39px;top:1260px;width:3711px;height:77px;background:#fff"></div>
<div style="position:absolute;left:39px;top:1337px;width:3711px;height:2px;background:#e3e3e3"></div>
<div class="t" style="left:113.5px;top:1282px;font-size:36px;line-height:36px;font-weight:400;color:#242424;letter-spacing:-1.008px;">România</div>
<svg style="position:absolute;left:48px;top:1281px" width="48" height="36" viewBox="48 1281 48 36"><rect x="49.5" y="1282.5" width="13" height="33" fill="#85b3ee" stroke="#4b7fc5" stroke-width="3"/><rect x="64" y="1281" width="16" height="36" fill="#ffe89c"/><rect x="64" y="1281" width="16" height="3" fill="#f4bf78"/><rect x="64" y="1314" width="16" height="3" fill="#f4bf78"/><rect x="81.5" y="1282.5" width="13" height="33" fill="#f59393" stroke="#bb4739" stroke-width="3"/></svg>
<div class="t" style="left:3534.0px;top:1282px;font-size:36px;line-height:36px;font-weight:400;color:#242424;letter-spacing:-1.350px;">02.12.2024</div>
<div style="position:absolute;left:39px;top:1339px;width:3711px;height:77px;background:#fff"></div>
<div style="position:absolute;left:39px;top:1416px;width:3711px;height:2px;background:#e3e3e3"></div>
<div class="t" style="left:114.5px;top:1361px;font-size:36px;line-height:36px;font-weight:400;color:#242424;letter-spacing:-1.408px;">Serbia</div>
<svg style="position:absolute;left:48px;top:1360px" width="48" height="36" viewBox="48 1360 48 36"><rect x="48" y="1384" width="48" height="12" fill="#eef5fd"/><rect x="49.5" y="1382" width="45" height="12.5" fill="none" stroke="#a6b6c8" stroke-width="3"/><rect x="49.5" y="1361.5" width="45" height="12" fill="#f59393" stroke="#bb4739" stroke-width="3"/><rect x="49.5" y="1373.5" width="45" height="9" fill="#85b3ee" stroke="#4b7fc5" stroke-width="3"/><rect x="60" y="1369" width="12" height="6" fill="#b0884f"/><path d="M61.5 1374h9v8a4.5 4.5 0 0 1 -9 0z" fill="#f59393" stroke="#bb4739" stroke-width="3"/></svg>
<div class="t" style="left:3534.0px;top:1361px;font-size:36px;line-height:36px;font-weight:400;color:#242424;letter-spacing:-1.350px;">02.12.2024</div>
<div style="position:absolute;left:39px;top:1418px;width:3711px;height:77px;background:#fff"></div>
<div style="position:absolute;left:39px;top:1495px;width:3711px;height:2px;background:#e3e3e3"></div>
<div class="t" style="left:115.5px;top:1440px;font-size:36px;line-height:36px;font-weight:400;color:#242424;letter-spacing:-1.232px;">Turcia</div>
<svg style="position:absolute;left:48px;top:1439px" width="48" height="36" viewBox="48 1439 48 36"><rect x="49.5" y="1440.5" width="45" height="33" fill="#f59393" stroke="#bb4739" stroke-width="3"/><circle cx="64" cy="1457" r="9" fill="#fff"/><circle cx="67" cy="1457" r="7.5" fill="#f59393"/><circle cx="72" cy="1457" r="2.6" fill="#fff"/></svg>
<div class="t" style="left:3534.0px;top:1440px;font-size:36px;line-height:36px;font-weight:400;color:#242424;letter-spacing:-1.350px;">02.12.2024</div>
<div style="position:absolute;left:39px;top:1497px;width:3711px;height:77px;background:#fff"></div>
<div style="position:absolute;left:39px;top:1574px;width:3711px;height:2px;background:#e3e3e3"></div>
<div class="t" style="left:114.5px;top:1519px;font-size:36px;line-height:36px;font-weight:400;color:#242424;letter-spacing:-1.815px;">Spania</div>
<svg style="position:absolute;left:48px;top:1518px" width="48" height="36" viewBox="48 1518 48 36"><rect x="48" y="1527" width="48" height="18" fill="#ffe89c"/><rect x="48" y="1527" width="3" height="18" fill="#f4bf78"/><rect x="93" y="1527" width="3" height="18" fill="#f4bf78"/><rect x="49.5" y="1519.5" width="45" height="6" fill="#f59393" stroke="#bb4739" stroke-width="3"/><rect x="49.5" y="1546.5" width="45" height="6" fill="#f59393" stroke="#bb4739" stroke-width="3"/><path d="M58.5 1531.5h6v7.5a3 3 0 0 1 -6 0z" fill="#f59393" stroke="#bb4739" stroke-width="3"/></svg>
<div class="t" style="left:3534.0px;top:1519px;font-size:36px;line-height:36px;font-weight:400;color:#242424;letter-spacing:-1.350px;">02.12.2024</div>
<div style="position:absolute;left:39px;top:1576px;width:3711px;height:77px;background:#fff"></div>
<div style="position:absolute;left:39px;top:1653px;width:3711px;height:2px;background:#e3e3e3"></div>
<div class="t" style="left:114.5px;top:1598px;font-size:36px;line-height:36px;font-weight:400;color:#242424;letter-spacing:-1.408px;">Serbia</div>
<svg style="position:absolute;left:48px;top:1597px" width="48" height="36" viewBox="48 1597 48 36"><rect x="48" y="1621" width="48" height="12" fill="#eef5fd"/><rect x="49.5" y="1619" width="45" height="12.5" fill="none" stroke="#a6b6c8" stroke-width="3"/><rect x="49.5" y="1598.5" width="45" height="12" fill="#f59393" stroke="#bb4739" stroke-width="3"/><rect x="49.5" y="1610.5" width="45" height="9" fill="#85b3ee" stroke="#4b7fc5" stroke-width="3"/><rect x="60" y="1606" width="12" height="6" fill="#b0884f"/><path d="M61.5 1611h9v8a4.5 4.5 0 0 1 -9 0z" fill="#f59393" stroke="#bb4739" stroke-width="3"/></svg>
<div class="t" style="left:3534.0px;top:1598px;font-size:36px;line-height:36px;font-weight:400;color:#242424;letter-spacing:-1.350px;">02.12.2024</div>
<div style="position:absolute;left:39px;top:1655px;width:3711px;height:77px;background:#e4e4e4"></div>
<div style="position:absolute;left:39px;top:1732px;width:3711px;height:2px;background:#e3e3e3"></div>
<div class="t" style="left:113.5px;top:1677px;font-size:36px;line-height:36px;font-weight:400;color:#242424;letter-spacing:-1.008px;">România</div>
<svg style="position:absolute;left:48px;top:1676px" width="48" height="36" viewBox="48 1676 48 36"><rect x="49.5" y="1677.5" width="13" height="33" fill="#85b3ee" stroke="#4b7fc5" stroke-width="3"/><rect x="64" y="1676" width="16" height="36" fill="#ffe89c"/><rect x="64" y="1676" width="16" height="3" fill="#f4bf78"/><rect x="64" y="1709" width="16" height="3" fill="#f4bf78"/><rect x="81.5" y="1677.5" width="13" height="33" fill="#f59393" stroke="#bb4739" stroke-width="3"/></svg>
<div class="t" style="left:3534.0px;top:1677px;font-size:36px;line-height:36px;font-weight:400;color:#242424;letter-spacing:-1.350px;">02.12.2024</div>
<div style="position:absolute;left:39px;top:1734px;width:3711px;height:77px;background:#fff"></div>
<div style="position:absolute;left:39px;top:1811px;width:3711px;height:2px;background:#e3e3e3"></div>
<div class="t" style="left:115.5px;top:1756px;font-size:36px;line-height:36px;font-weight:400;color:#242424;letter-spacing:-1.232px;">Turcia</div>
<svg style="position:absolute;left:48px;top:1755px" width="48" height="36" viewBox="48 1755 48 36"><rect x="49.5" y="1756.5" width="45" height="33" fill="#f59393" stroke="#bb4739" stroke-width="3"/><circle cx="64" cy="1773" r="9" fill="#fff"/><circle cx="67" cy="1773" r="7.5" fill="#f59393"/><circle cx="72" cy="1773" r="2.6" fill="#fff"/></svg>
<div class="t" style="left:3534.0px;top:1756px;font-size:36px;line-height:36px;font-weight:400;color:#242424;letter-spacing:-1.350px;">02.12.2024</div>
<div style="position:absolute;left:39px;top:1813px;width:3711px;height:77px;background:#fff"></div>
<div style="position:absolute;left:39px;top:1890px;width:3711px;height:2px;background:#e3e3e3"></div>
<div class="t" style="left:114.5px;top:1835px;font-size:36px;line-height:36px;font-weight:400;color:#242424;letter-spacing:-1.408px;">Serbia</div>
<svg style="position:absolute;left:48px;top:1834px" width="48" height="36" viewBox="48 1834 48 36"><rect x="48" y="1858" width="48" height="12" fill="#eef5fd"/><rect x="49.5" y="1856" width="45" height="12.5" fill="none" stroke="#a6b6c8" stroke-width="3"/><rect x="49.5" y="1835.5" width="45" height="12" fill="#f59393" stroke="#bb4739" stroke-width="3"/><rect x="49.5" y="1847.5" width="45" height="9" fill="#85b3ee" stroke="#4b7fc5" stroke-width="3"/><rect x="60" y="1843" width="12" height="6" fill="#b0884f"/><path d="M61.5 1848h9v8a4.5 4.5 0 0 1 -9 0z" fill="#f59393" stroke="#bb4739" stroke-width="3"/></svg>
<div class="t" style="left:3534.0px;top:1835px;font-size:36px;line-height:36px;font-weight:400;color:#242424;letter-spacing:-1.350px;">02.12.2024</div>
<div style="position:absolute;left:3750px;top:628px;width:50px;height:1263px;background:#f3f3f3"></div>
<div style="position:absolute;left:3750px;top:546px;width:2px;height:81px;background:#e3e3e3"></div>
<div style="position:absolute;left:3771px;top:680px;width:9px;height:90px;background:#8f8f8f;border-radius:5px"></div>
<div style="position:absolute;left:64px;top:1920px;width:849px;height:72px;background:#fff;border:2px solid #dadada;border-bottom-color:#c8c8c8;border-radius:10px;box-sizing:border-box"></div>
<div class="t" style="left:303.5px;top:1941px;font-size:36px;line-height:36px;font-weight:400;color:#242424;letter-spacing:-0.380px;">Înregistrarea 13 din 191</div>
<svg style="position:absolute;left:78px;top:1938px" width="42" height="36" viewBox="78 1938 42 36"><path d="M82.5 1944V1968M100 1944L88 1956L100 1968M115 1944L103 1956L115 1968" fill="none" stroke="#1c1c1c" stroke-width="3" stroke-linejoin="miter"/></svg><svg style="position:absolute;left:155px;top:1938px" width="35" height="36" viewBox="155 1938 35 36"><path d="M172 1944L160 1956L172 1968M186 1944L174 1956L186 1968" fill="none" stroke="#1c1c1c" stroke-width="3" stroke-linejoin="miter"/></svg><svg style="position:absolute;left:234px;top:1938px" width="22" height="36" viewBox="234 1938 22 36"><path d="M252 1944L240 1956L252 1968" fill="none" stroke="#1c1c1c" stroke-width="3" stroke-linejoin="miter"/></svg><svg style="position:absolute;left:722px;top:1938px" width="24" height="36" viewBox="722 1938 24 36"><path d="M726 1944L738 1956L726 1968" fill="none" stroke="#1c1c1c" stroke-width="3" stroke-linejoin="miter"/></svg><svg style="position:absolute;left:789px;top:1938px" width="35" height="36" viewBox="789 1938 35 36"><path d="M793 1944L805 1956L793 1968M807 1944L819 1956L807 1968" fill="none" stroke="#1c1c1c" stroke-width="3" stroke-linejoin="miter"/></svg><svg style="position:absolute;left:858px;top:1938px" width="42" height="36" viewBox="858 1938 42 36"><path d="M862 1944L874 1956L862 1968M876 1944L888 1956L876 1968M896 1944V1968" fill="none" stroke="#1c1c1c" stroke-width="3" stroke-linejoin="miter"/></svg>
<div style="position:absolute;left:0px;top:2056px;width:3840px;height:3px;background:#d0d0d0"></div>
<div style="position:absolute;left:0px;top:2059px;width:3840px;height:101px;background:linear-gradient(#f4f4f4,#fafafa)"></div>
<div style="position:absolute;left:372px;top:519px;width:3155px;height:1408px;background:#f3f3f3;border:3px solid #a9a9a9;border-radius:21px;box-sizing:border-box;box-shadow:0 70px 140px rgba(0,0,0,0.24),0 4px 36px rgba(0,0,0,0.10)"></div>
<div class="t" style="left:470.5px;top:548px;font-size:36px;line-height:36px;font-weight:400;color:#242424;letter-spacing:0.112px;">Poison Centre Notification</div>
<div class="t" style="left:411.0px;top:669px;font-size:36px;line-height:36px;font-weight:400;color:#242424;letter-spacing:-0.172px;">Tip comunicare</div>
<div class="t" style="left:409.0px;top:759px;font-size:36px;line-height:36px;font-weight:400;color:#242424;letter-spacing:0.894px;">Notificator</div>
<div class="t" style="left:409.0px;top:845px;font-size:36px;line-height:36px;font-weight:400;color:#242424;letter-spacing:-0.350px;">Nișă de piață activă</div>
<div style="position:absolute;left:807px;top:646px;width:2681px;height:75px;background:#fff;border:2px solid #e2e2e2;border-bottom:3px solid #8d8d8d;border-radius:10px;box-sizing:border-box"></div>
<div class="t" style="left:818.0px;top:669px;font-size:36px;line-height:36px;font-weight:400;color:#242424;letter-spacing:-0.299px;">Comunicare primară</div>
<div style="position:absolute;left:807px;top:737px;width:2681px;height:75px;background:#fff;border:2px solid #e2e2e2;border-bottom:3px solid #8d8d8d;border-radius:10px;box-sizing:border-box"></div>
<div class="t" style="left:819.0px;top:759px;font-size:36px;line-height:36px;font-weight:400;color:#242424;letter-spacing:-0.104px;">Trial ltd.</div>
<div style="position:absolute;left:807px;top:825px;width:2681px;height:74px;background:#f9f9f9;border:2px solid #e2e2e2;border-radius:10px;box-sizing:border-box"></div>
<div class="t" style="left:892.0px;top:845px;font-size:36px;line-height:36px;font-weight:400;color:#242424;letter-spacing:-1.175px;">România</div>
<div style="position:absolute;left:807px;top:920px;width:46px;height:46px;background:#fff;border:2px solid #c6c6c6;border-radius:9px;box-sizing:border-box"></div>
<div class="t" style="left:868.0px;top:927px;font-size:36px;line-height:36px;font-weight:400;color:#242424;letter-spacing:-0.337px;">Atașați fișa cu date de securitate în format PDF</div>
<div style="position:absolute;left:411px;top:987px;width:3076px;height:740px;background:#fff;border:2px solid #d5d5d5;border-radius:10px;box-sizing:border-box"></div>
<div style="position:absolute;left:413px;top:989px;width:3072px;height:59px;background:#fafafa;border-radius:8px 8px 0 0"></div>
<div class="t" style="left:446.0px;top:1003px;font-size:36px;line-height:36px;font-weight:400;color:#242424;letter-spacing:-0.308px;">Erori și avertizări</div>
<div style="position:absolute;left:413px;top:1047px;width:3072px;height:2px;background:#dcdcdc"></div>
<div style="position:absolute;left:413px;top:1049px;width:3072px;height:83px;background:#fafafa"></div>
<div style="position:absolute;left:413px;top:1131px;width:3072px;height:2px;background:#e3e3e3"></div>
<div style="position:absolute;left:413px;top:1133px;width:3072px;height:78px;background:#edf3fc"></div>
<div style="position:absolute;left:413px;top:1210px;width:3072px;height:2px;background:#e3e3e3"></div>
<div style="position:absolute;left:413px;top:1289px;width:3072px;height:2px;background:#e3e3e3"></div>
<div style="position:absolute;left:637px;top:1049px;width:3px;height:241px;background:#e3e3e3"></div>
<div style="position:absolute;left:814px;top:1049px;width:3px;height:241px;background:#e3e3e3"></div>
<div style="position:absolute;left:1592px;top:1049px;width:3px;height:241px;background:#e3e3e3"></div>
<div style="position:absolute;left:2995px;top:1049px;width:3px;height:241px;background:#e3e3e3"></div>
<div class="t" style="left:431.0px;top:1075px;font-size:36px;line-height:36px;font-weight:400;color:#242424;letter-spacing:-0.326px;">Tip</div>
<div class="t" style="left:656.5px;top:1075px;font-size:36px;line-height:36px;font-weight:400;color:#242424;letter-spacing:-1.260px;">Cod</div>
<div class="t" style="left:833.0px;top:1075px;font-size:36px;line-height:36px;font-weight:400;color:#242424;letter-spacing:-0.468px;">Fișa cu date de securitate</div>
<div class="t" style="left:1610.0px;top:1075px;font-size:36px;line-height:36px;font-weight:400;color:#242424;letter-spacing:-0.502px;">Descriere</div>
<div class="t" style="left:3014.5px;top:1075px;font-size:36px;line-height:36px;font-weight:400;color:#242424;letter-spacing:-0.845px;">Valoarea</div>
<div class="t" style="left:489.0px;top:1155px;font-size:36px;line-height:36px;font-weight:400;color:#242424;letter-spacing:-1.206px;">Eroare</div>
<div class="t" style="left:652.0px;top:1155px;font-size:36px;line-height:36px;font-weight:400;color:#242424;letter-spacing:-2.513px;">BR530</div>
<div class="t" style="left:829.0px;top:1155px;font-size:36px;line-height:36px;font-weight:400;color:#242424;letter-spacing:-1.070px;">EXEMPLU Amestec periculos</div>
<div class="t" style="left:1607.0px;top:1155px;font-size:36px;line-height:36px;font-weight:400;color:#242424;letter-spacing:-0.306px;">Specificați culoarea în secțiunea 9 "Caracteristici".</div>
<div class="t" style="left:3009.0px;top:1155px;font-size:36px;line-height:36px;font-weight:400;color:#242424;letter-spacing:-1.028px;">EXEMPLU Amestec periculos</div>
<div class="t" style="left:489.0px;top:1234px;font-size:36px;line-height:36px;font-weight:400;color:#242424;letter-spacing:-1.206px;">Eroare</div>
<div class="t" style="left:652.0px;top:1234px;font-size:36px;line-height:36px;font-weight:400;color:#242424;letter-spacing:-2.513px;">BR534</div>
<div class="t" style="left:829.0px;top:1234px;font-size:36px;line-height:36px;font-weight:400;color:#242424;letter-spacing:-1.070px;">EXEMPLU Amestec periculos</div>
<div class="t" style="left:1607.0px;top:1234px;font-size:36px;line-height:36px;font-weight:400;color:#242424;letter-spacing:-0.230px;">Completați EuPCS (utilizare principală planificată) în secțiunea "Identificare".</div>
<div class="t" style="left:3009.0px;top:1234px;font-size:36px;line-height:36px;font-weight:400;color:#242424;letter-spacing:-1.028px;">EXEMPLU Amestec periculos</div>
<div style="position:absolute;left:417px;top:1793px;width:391px;height:86px;background:#fff;border:2px solid #e0e0e0;border-bottom-color:#cccccc;border-radius:10px;box-sizing:border-box"></div>
<div class="t" style="left:598.7px;top:1822px;font-size:36px;line-height:36px;font-weight:400;color:#242424;letter-spacing:-2.208px;">Excel</div>
<div style="position:absolute;left:834px;top:1793px;width:503px;height:86px;background:#fff;border:2px solid #e0e0e0;border-bottom-color:#cccccc;border-radius:10px;box-sizing:border-box"></div>
<div class="t" style="left:1024.0px;top:1822px;font-size:36px;line-height:36px;font-weight:400;color:#242424;letter-spacing:-1.130px;">Dosar PCN</div>
<div style="position:absolute;left:2519px;top:1793px;width:547px;height:86px;background:#fff;border:5px solid #2e72ad;border-radius:11px;box-sizing:border-box"></div>
<div class="t" style="left:2661px;top:1822px;font-size:36px;line-height:36px;color:#242424;letter-spacing:-0.4px">Notifică online (S<span style="font-size:24px;position:relative;top:5px">2</span>S)</div>
<div style="position:absolute;left:3091px;top:1793px;width:391px;height:86px;background:#fff;border:2px solid #e0e0e0;border-bottom-color:#cccccc;border-radius:10px;box-sizing:border-box"></div>
<div class="t" style="left:3252.0px;top:1822px;font-size:36px;line-height:36px;font-weight:400;color:#242424;letter-spacing:-0.510px;">Anulare</div>
<svg style="position:absolute;left:395px;top:535px" width="57" height="57" viewBox="395 535 57 57"><path d="M421.1 541.6A21.5 21.5 0 1 1 401.6 564.9" fill="none" stroke="#3f86d0" stroke-width="4.5" stroke-linecap="round"/><path d="M434.7 558.7A12.5 12.5 0 1 1 418.7 551.3" fill="none" stroke="#3f86d0" stroke-width="4" stroke-linecap="round"/><circle cx="423" cy="563" r="6.5" fill="#57a56a"/></svg><svg style="position:absolute;left:3322px;top:542px" width="42" height="42" viewBox="3322 542 42 42"><rect x="3329.5" y="549.5" width="27.5" height="27" rx="4" fill="none" stroke="#1c1c1c" stroke-width="3"/></svg><svg style="position:absolute;left:3443px;top:541px" width="44" height="44" viewBox="3443 541 44 44"><path d="M3450 548L3480 578M3480 548L3450 578" stroke="#1c1c1c" stroke-width="2.6"/></svg><svg style="position:absolute;left:3429px;top:672px" width="48" height="26" viewBox="3429 672 48 26"><path d="M3441.0 678.5L3453 691.5L3465.0 678.5" fill="none" stroke="#1c1c1c" stroke-width="3" stroke-linecap="round" stroke-linejoin="round"/></svg><svg style="position:absolute;left:3429px;top:762px" width="48" height="26" viewBox="3429 762 48 26"><path d="M3441.0 768.5L3453 781.5L3465.0 768.5" fill="none" stroke="#1c1c1c" stroke-width="3" stroke-linecap="round" stroke-linejoin="round"/></svg><svg style="position:absolute;left:824px;top:840px" width="48" height="36" viewBox="824 840 48 36"><rect x="825.5" y="841.5" width="13" height="33" fill="#85b3ee" stroke="#4b7fc5" stroke-width="3"/><rect x="840" y="840" width="16" height="36" fill="#ffe89c"/><rect x="840" y="840" width="16" height="3" fill="#f4bf78"/><rect x="840" y="873" width="16" height="3" fill="#f4bf78"/><rect x="857.5" y="841.5" width="13" height="33" fill="#f59393" stroke="#bb4739" stroke-width="3"/></svg><svg style="position:absolute;left:423px;top:1148px" width="48" height="48" viewBox="423 1148 48 48"><rect x="433" y="1158" width="28" height="28" rx="3" transform="rotate(45 447 1172)" fill="#f59393" stroke="#bb4739" stroke-width="3"/></svg><svg style="position:absolute;left:423px;top:1227px" width="48" height="48" viewBox="423 1227 48 48"><rect x="433" y="1237" width="28" height="28" rx="3" transform="rotate(45 447 1251)" fill="#f59393" stroke="#bb4739" stroke-width="3"/></svg><svg style="position:absolute;left:437px;top:1810px" width="54" height="54" viewBox="437 1810 54 54"><path d="M468 1820.5H486V1853.5H468" fill="#fff" stroke="#57a56a" stroke-width="3"/><rect x="472" y="1828" width="11" height="2" fill="#b9d3ec"/><rect x="472" y="1834" width="11" height="2" fill="#b9d3ec"/><rect x="472" y="1840" width="11" height="2" fill="#b9d3ec"/><rect x="472" y="1846" width="11" height="2" fill="#b9d3ec"/><path d="M441.5 1818.5L469.5 1814V1860L441.5 1855.5Z" fill="#c9cdca" stroke="#57a56a" stroke-width="3" stroke-linejoin="miter"/><path d="M447 1826L461 1848M461 1826L447 1848" stroke="#fff" stroke-width="4"/></svg><svg style="position:absolute;left:852px;top:1808px" width="58" height="58" viewBox="852 1808 58 58"><line x1="875.0" y1="1837.0" x2="858.0" y2="1837.0" stroke="#b9b5b8" stroke-width="3.5" stroke-linecap="round"/><line x1="887.0" y1="1837.0" x2="904.0" y2="1837.0" stroke="#b9b5b8" stroke-width="3.5" stroke-linecap="round"/><line x1="876.8" y1="1832.8" x2="864.7" y2="1820.7" stroke="#b9b5b8" stroke-width="3.5" stroke-linecap="round"/><line x1="885.2" y1="1832.8" x2="897.3" y2="1820.7" stroke="#b9b5b8" stroke-width="3.5" stroke-linecap="round"/><line x1="876.8" y1="1841.2" x2="864.7" y2="1853.3" stroke="#b9b5b8" stroke-width="3.5" stroke-linecap="round"/><line x1="885.2" y1="1841.2" x2="897.3" y2="1853.3" stroke="#b9b5b8" stroke-width="3.5" stroke-linecap="round"/><line x1="881.0" y1="1843.0" x2="881.0" y2="1860.0" stroke="#b9b5b8" stroke-width="3.5" stroke-linecap="round"/><path d="M878 1816A3 3 0 0 1 884 1816L882.5 1830H879.5Z" fill="#463a73"/><circle cx="881" cy="1837" r="2.2" fill="#463a73"/></svg><svg style="position:absolute;left:2540px;top:1810px" width="51" height="51" viewBox="2540 1810 51 51"><circle cx="2565.5" cy="1835.5" r="21" fill="#85b3ee" stroke="#4b7fc5" stroke-width="3"/><circle cx="2565.5" cy="1826" r="2.3" fill="#fff"/><path d="M2561 1831.5H2567.5V1845H2570V1848H2561V1845H2563.5V1834.5H2561Z" fill="#fff"/></svg><svg style="position:absolute;left:3108px;top:1808px" width="57" height="56" viewBox="3108 1808 57 56"><path d="M3120.5 1819.5L3152.5 1851.5M3152.5 1819.5L3120.5 1851.5" stroke="#bb4739" stroke-width="8" stroke-linecap="square"/><path d="M3120.5 1819.5L3152.5 1851.5M3152.5 1819.5L3120.5 1851.5" stroke="#f59393" stroke-width="2.2"/></svg>
</body></html>
